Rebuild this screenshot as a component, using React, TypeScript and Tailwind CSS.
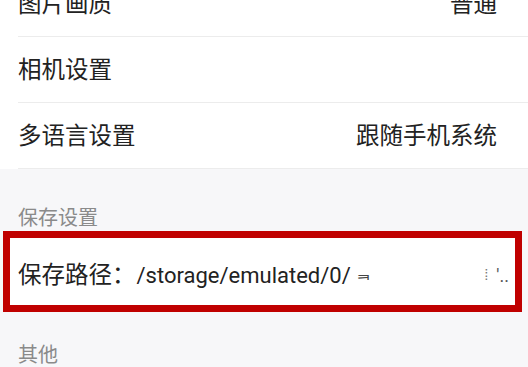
const ROWS = [
  { label: "图片画质", value: "普通" },
  { label: "相机设置", value: "" },
  { label: "多语言设置", value: "跟随手机系统" },
];

function SettingRow({ label, value, first }: { label: string; value: string; first?: boolean }) {
  return (
    <div className={`bg-white pl-[18px] ${first ? "-mt-[29px]" : ""}`}>
      <div className="flex h-[66px] items-center justify-between border-b border-[#ececec] pr-[31px] pt-[3px]">
        <span className="text-[23.5px] text-[#222]">{label}</span>
        {value && <span className="text-[23.5px] text-[#222]">{value}</span>}
      </div>
    </div>
  );
}

export default function App() {
  return (
    <div
      className="h-[367px] w-[528px] overflow-hidden bg-[#f7f7f9]"
      style={{ fontFamily: 'Roboto, "Noto Sans CJK SC", sans-serif' }}
    >
      {ROWS.map((r, i) => (
        <SettingRow key={r.label} label={r.label} value={r.value} first={i === 0} />
      ))}

      <div className="h-[62px] pl-[18px] pt-[37px] text-[20px] leading-[25px] text-[#8a8a8a]">保存设置</div>

      <div className="ml-[3px] flex h-[81px] w-[519px] items-center border-[7px] border-[#c00000] bg-white pl-[8px] pr-[6px] pt-[8px]">
        <span className="text-[23.5px] text-[#222]">保存路径：</span>
        <span className="ml-[1px] text-[22px] text-[#222]">/storage/emulated/0/</span>
        <span className="ml-[5px] -mt-[6px] text-[17px] text-[#444]">ᆿ</span>
        <span className="flex-1" />
        <span className="text-[15px] text-[#777]">⁞</span>
        <span className="ml-[8px] text-[18px] text-[#555]">′..</span>
      </div>

      <div className="pl-[18px] pt-[30px] text-[20px] leading-[27px] text-[#8a8a8a]">其他</div>
    </div>
  );
}
